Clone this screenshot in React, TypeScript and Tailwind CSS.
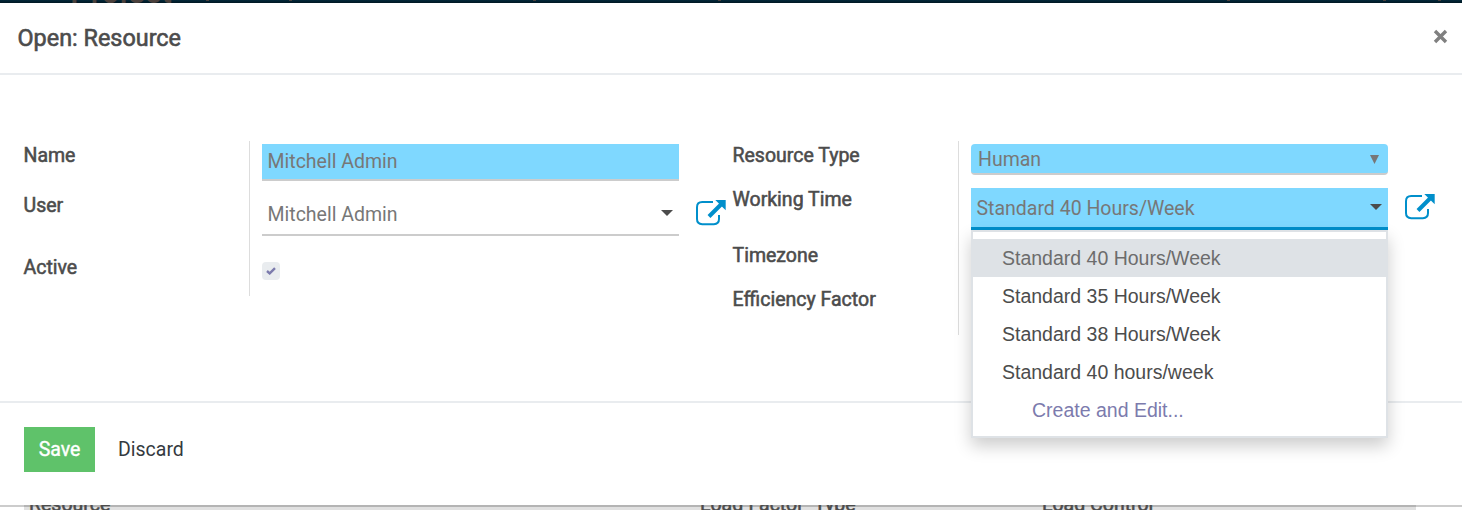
import type { ReactNode } from "react";

function Label({ children, className }: { children: ReactNode; className: string }) {
  return (
    <div className={`text-[19.5px] leading-6 text-[#4c4c4c] whitespace-nowrap [-webkit-text-stroke:0.55px_#4c4c4c] ${className}`}>
      {children}
    </div>
  );
}

function ExternalLink() {
  return (
    <svg width="30" height="27" viewBox="0 0 30 27" className="block shrink-0" fill="none">
      <path d="M17 3.1H6.2C3 3.1 1 5.1 1 8.2v11.9c0 3.1 2 5.1 5.2 5.1h11.7c3.1 0 5.1-2 5.1-5.1V16" stroke="#008fcb" strokeWidth="2" />
      <path d="M13 17.5 25.5 5" stroke="#008fcb" strokeWidth="4" />
      <path d="M19.3 1H29.7V11.2Z" fill="#008fcb" />
    </svg>
  );
}

function Caret() {
  return (
    <svg width="12" height="6" viewBox="0 0 12 6" className="block shrink-0">
      <path d="M0 0h12L6 6Z" fill="#4c4c4c" />
    </svg>
  );
}

const options = ["Standard 40 Hours/Week", "Standard 35 Hours/Week", "Standard 38 Hours/Week", "Standard 40 hours/week"];
const marks = [206, 289, 533, 718, 1227, 1383, 1438];

export default function App() {
  return (
    <div className="flex h-[510px] w-[1462px] flex-col overflow-hidden bg-white font-['Roboto',sans-serif]">
      <div className="relative h-[3px] shrink-0 overflow-hidden bg-gradient-to-b from-[#03283a] to-[#001722]">
        <span className="absolute bottom-[-5px] left-[70px] text-[32px] leading-[32px] font-medium text-[#4a403c]">Project</span>
        {marks.map((x) => (
          <i key={x} className="absolute top-0 h-px w-[3px] bg-[#4a403c]" style={{ left: x }} />
        ))}
      </div>
      <header className="flex h-[72px] shrink-0 items-center justify-between border-b-2 border-[#e9ecef] pr-[14px] pl-[17.5px]">
        <h1 className="pb-px text-[23.4px] leading-8 text-[#4c4c4c] [-webkit-text-stroke:0.6px_#4c4c4c]">Open: Resource</h1>
        <svg width="15" height="15" viewBox="0 0 15 15" className="mb-[3px]">
          <path d="M2 2 13 13M13 2 2 13" stroke="#808080" strokeWidth="3.4" />
        </svg>
      </header>

      <main className="flex h-[328px] shrink-0 items-start border-b-2 border-[#e9ecef] pt-[66px] pl-6 text-[19.5px] text-[#777]">
        <div className="-ml-[0.5px] flex h-[155px] w-[226.5px] flex-col border-r border-[#ddd] pt-[3px]">
          <Label className="">Name</Label>
          <Label className="mt-[26px]">User</Label>
          <Label className="mt-[38px]">Active</Label>
        </div>
        <div className="ml-3 w-[417px] pt-[3px]">
          <div className="flex h-[37px] items-center border-b-2 border-[#ccc] bg-[#7fd8ff] pl-[5.5px]">Mitchell Admin</div>
          <div className="mt-[11px] flex h-11 items-center justify-between border-b-2 border-[#ccc] pr-[6px] pl-[5.5px]">
            <span className="pt-[3px]">Mitchell Admin</span>
            <Caret />
          </div>
          <div className="mt-[26px] flex size-[18px] items-center justify-center rounded-[4px] bg-[#e9ecef]">
            <svg width="10" height="8" viewBox="0 0 10 8">
              <path d="m1 4 2.7 2.4L9 1.2" stroke="#7c7bad" strokeWidth="2.4" fill="none" />
            </svg>
          </div>
        </div>
        <div className="ml-[17px] pt-[58px]">
          <ExternalLink />
        </div>
        <div className="ml-[6px] flex h-[194px] w-[227px] flex-col border-r border-[#ddd] pt-[3px] pl-[0.5px]">
          <Label className="">Resource Type</Label>
          <Label className="mt-5">Working Time</Label>
          <Label className="mt-8">Timezone</Label>
          <Label className="mt-5">Efficiency Factor</Label>
        </div>
        <div className="relative ml-3 w-[417px] pt-[3px]">
          <div className="flex h-[31px] items-center justify-between rounded-[4px] border-b-2 border-[#ccc] bg-[#7fd8ff] pr-[9px] pl-[7px]">
            <span className="pt-[2px]">Human</span>
            <svg width="9" height="9" viewBox="0 0 9 9" className="mt-px">
              <path d="M0 0h9L4.5 9Z" fill="#777" />
            </svg>
          </div>
          <div className="mt-[13px] flex h-[42px] items-center justify-between border-b-3 border-[#008fcb] bg-[#7fd8ff] pr-[6px] pl-[5.5px]">
            <span className="pt-[2px]">Standard 40 Hours/Week</span>
            <span className="pb-px">
              <Caret />
            </span>
          </div>
          <div className="absolute top-[89px] left-0 h-[208px] w-[417px] border-2 border-[#dee2e6] bg-white pt-[7px] font-['Liberation_Sans',sans-serif] text-[19.5px] text-[#4c4c4c] shadow-[0_8px_16px_rgba(0,0,0,0.2)]">
            {options.map((o, i) => (
              <div key={o} className={`h-[38px] pl-[29px] leading-[38px] ${i === 0 ? "bg-[#dee2e6] text-[#6c6c6c]" : ""}`}>
                {o}
              </div>
            ))}
            <div className="h-[38px] pl-[59px] leading-[38px] text-[#7c7bad]">Create and Edit...</div>
          </div>
        </div>
        <div className="ml-[17px] pt-[52px]">
          <ExternalLink />
        </div>
      </main>

      <footer className="flex h-[102px] shrink-0 items-start pt-[24px] pl-6 text-[19.5px]">
        <button className="h-[45px] w-[71px] bg-[#5fc26a] text-white [-webkit-text-stroke:0.4px_white]">Save</button>
        <button className="ml-[23px] h-[45px] text-[#343a40]">Discard</button>
      </footer>
      <div className="flex h-[5px] shrink-0">
        <div className="h-[5px] w-6 border-t-2 border-[#ccc]" />
        <div className="flex h-[5px] w-[1392px] overflow-hidden bg-[linear-gradient(#b4b4b4_2px,#e0e0e0_2px)] pl-[5px]">
          <Label className="-mt-[12px] w-[671px]">Resource</Label>
          <Label className="-mt-[12px] w-[342px] [word-spacing:0.5px]">Load Factor&nbsp; Type</Label>
          <Label className="-mt-[12px]">Load Control</Label>
        </div>
        <div className="h-[5px] grow border-t-2 border-[#ccc]" />
      </div>
    </div>
  );
}
